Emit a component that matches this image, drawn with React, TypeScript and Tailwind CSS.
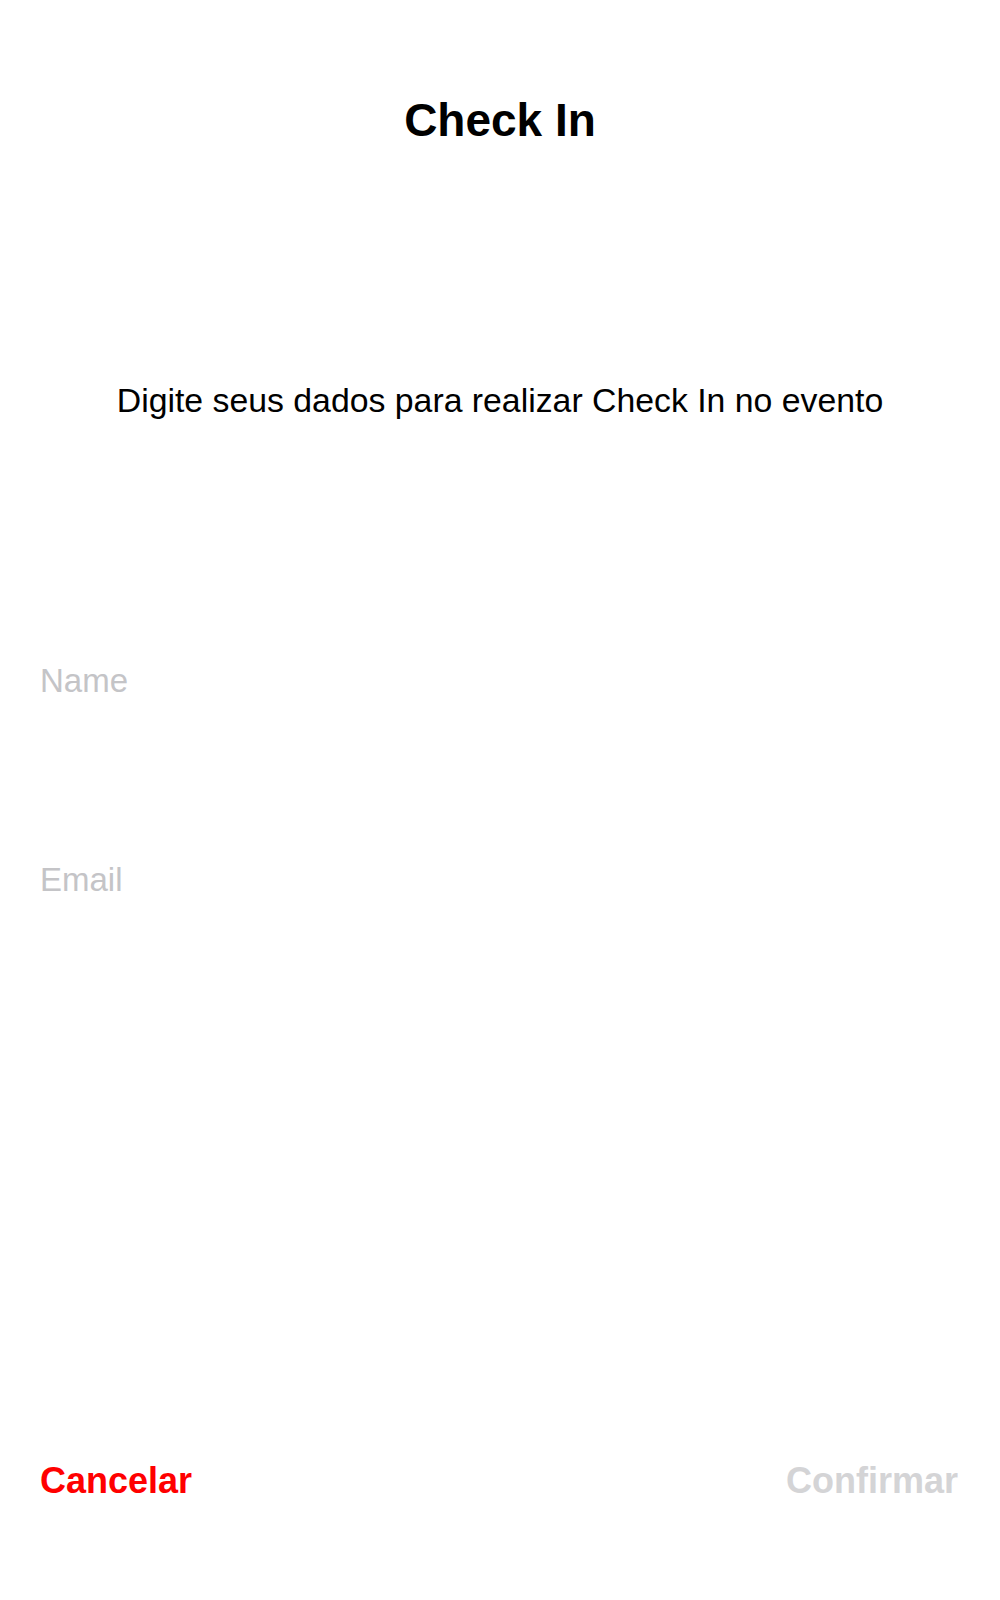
import React from "react";

export default function App() {
  return (
    <div
      className="flex h-[1600px] w-full flex-col bg-white px-[40px] text-black"
      style={{ fontFamily: '"Liberation Sans", Arial, sans-serif' }}
    >
      <h1 className="pt-[97px] text-center text-[46px] font-bold leading-none">Check In</h1>
      <p className="mt-[241px] text-center text-[33.8px] leading-none">
        Digite seus dados para realizar Check In no evento
      </p>
      <input
        type="text"
        placeholder="Name"
        className="mt-[247px] h-[33px] w-full bg-transparent text-[33px] leading-none outline-none placeholder:text-[#c4c4c7]"
      />
      <input
        type="email"
        placeholder="Email"
        className="mt-[166px] h-[33px] w-full bg-transparent text-[33px] leading-none outline-none placeholder:text-[#c4c4c7]"
      />
      <div className="mt-auto flex items-center justify-between pb-[101px] pr-[2px]">
        <button className="text-[36px] font-bold leading-none text-[#ff0000]">Cancelar</button>
        <button className="text-[36px] font-bold leading-none text-[#d4d4d6]" disabled>
          Confirmar
        </button>
      </div>
    </div>
  );
}
